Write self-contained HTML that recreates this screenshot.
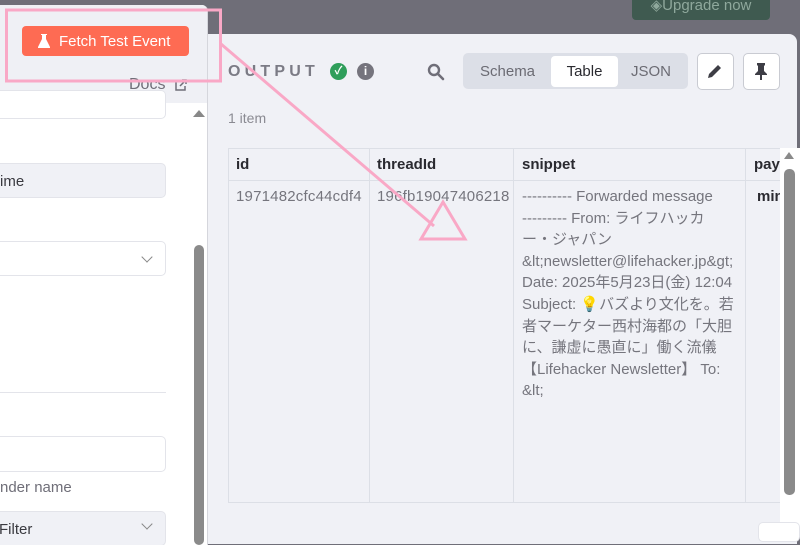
<!DOCTYPE html>
<html><head><meta charset="utf-8"><style>
*{box-sizing:border-box;margin:0;padding:0}
body{width:800px;height:533px;overflow:hidden;background:#6f6e78;position:relative;font-family:"Liberation Sans","Noto Sans CJK JP",sans-serif;}
.abs{position:absolute}
</style></head><body>
<div class="abs" style="left:632px;top:-12px;width:138px;height:32px;background:#3f5a50;border-radius:4px;color:#8fa89c;font-size:15px;line-height:36px;text-align:center">◈Upgrade now</div>
<div class="abs" style="left:200px;top:34px;width:597px;height:510px;background:#f0f1f6;border-radius:0 8px 0 0"></div>
<div class="abs" style="left:228px;top:63px;font-size:16px;letter-spacing:4.2px;color:#7b7b85;font-weight:bold">OUTPUT</div>
<div class="abs" style="left:330px;top:63px;width:17px;height:17px;border-radius:50%;background:#2f9e5b;color:#fff;font-size:11px;text-align:center;line-height:17px;font-weight:bold">✓</div>
<div class="abs" style="left:357px;top:63px;width:17px;height:17px;border-radius:50%;background:#75747d;color:#fff;font-size:12px;text-align:center;line-height:17px;font-weight:bold">i</div>
<svg class="abs" style="left:427px;top:63px" width="18" height="18" viewBox="0 0 18 18"><circle cx="7" cy="7" r="5" fill="none" stroke="#6f6e78" stroke-width="2.4"/><path d="M11 11l5 5" stroke="#6f6e78" stroke-width="2.6" stroke-linecap="round"/></svg>
<div class="abs" style="left:463px;top:53px;width:225px;height:36px;background:#dcdfe7;border-radius:5px"></div>
<div class="abs" style="left:480px;top:63px;font-size:15px;color:#6b6b73">Schema</div>
<div class="abs" style="left:551px;top:56px;width:67px;height:31px;background:#fff;border-radius:4px;font-size:15px;color:#2a2a30;text-align:center;line-height:32px">Table</div>
<div class="abs" style="left:631px;top:63px;font-size:15px;color:#6b6b73">JSON</div>
<div class="abs" style="left:697px;top:53px;width:37px;height:37px;background:#fff;border:1px solid #c9cbd2;border-radius:5px"></div>
<svg class="abs" style="left:705px;top:61px" width="20" height="20" viewBox="0 0 20 20"><path d="M3 17l1-4 9-9 3 3-9 9z" fill="#3d3d45"/></svg>
<div class="abs" style="left:743px;top:53px;width:37px;height:37px;background:#fff;border:1px solid #c9cbd2;border-radius:5px"></div>
<svg class="abs" style="left:751px;top:61px" width="20" height="20" viewBox="0 0 20 20"><path d="M6 2h8v2l-1 1v5l3 3v1H4v-1l3-3V5L6 4z M9 14h2v5H9z" fill="#3d3d45"/></svg>
<div class="abs" style="left:228px;top:110px;font-size:14px;color:#8a8a92">1 item</div>
<div class="abs" style="left:228px;top:148px;width:560px;height:355px;border:1px solid #dcdfe6;border-right:none"></div>
<div class="abs" style="left:228px;top:180px;width:560px;height:1px;background:#dcdfe6"></div>
<div class="abs" style="left:369px;top:148px;width:1px;height:355px;background:#dcdfe6"></div>
<div class="abs" style="left:513px;top:148px;width:1px;height:355px;background:#dcdfe6"></div>
<div class="abs" style="left:745px;top:148px;width:1px;height:355px;background:#dcdfe6"></div>
<div class="abs" style="left:236px;top:156px;font-size:15px;font-weight:bold;color:#2a2a30">id</div>
<div class="abs" style="left:377px;top:156px;font-size:15px;font-weight:bold;color:#2a2a30">threadId</div>
<div class="abs" style="left:522px;top:156px;font-size:15px;font-weight:bold;color:#2a2a30">snippet</div>
<div class="abs" style="left:754px;top:156px;font-size:15px;font-weight:bold;color:#2a2a30">pay</div>
<div class="abs" style="left:236px;top:188px;font-size:15px;letter-spacing:0.2px;color:#75757d">1971482cfc44cdf4</div>
<div class="abs" style="left:377px;top:188px;font-size:15px;letter-spacing:0.2px;color:#75757d">196fb19047406218</div>
<div class="abs" style="left:757px;top:188px;font-size:15px;font-weight:bold;color:#2a2a30">min</div>
<div class="abs" style="left:522px;top:186px;white-space:nowrap;font-size:15px;line-height:21.6px;color:#75757d">---------- Forwarded message<br>--------- From: ライフハッカ<br>ー・ジャパン<br>&amp;lt;newsletter@lifehacker.jp&amp;gt;<br>Date: 2025年5月23日(金) 12:04<br>Subject: <span style="color:#e88">💡</span>バズより文化を。若<br>者マーケター西村海都の「大胆<br>に、謙虚に愚直に」働く流儀<br>【Lifehacker Newsletter】 To:<br>&amp;lt;</div>
<div class="abs" style="left:780px;top:148px;width:20px;height:385px;background:#fff"></div>
<div class="abs" style="left:784px;top:169px;width:11px;border-radius:5px;height:326px;background:#8a8a8a"></div>
<div class="abs" style="left:784px;top:152px;width:0;height:0;border-left:5px solid transparent;border-right:5px solid transparent;border-bottom:7px solid #8a8a8a"></div>
<div class="abs" style="left:758px;top:522px;width:42px;height:20px;background:#fff;border-radius:5px;border:1px solid #e3e4ea"></div>
<div class="abs" style="left:0;top:5px;width:208px;height:540px;background:#fff;border-right:1px solid #d5d6dc;border-radius:0 6px 0 0;overflow:hidden">
 <div class="abs" style="left:0;top:0;width:208px;height:98px;background:#eff0f5"></div>
 <div class="abs" style="left:22px;top:21px;width:167px;height:30px;background:#fe6b53;border-radius:4px;color:#fff;font-size:15px;line-height:31px;padding-left:37px">Fetch Test Event</div>
 <svg class="abs" style="left:38px;top:29px" width="12" height="14" viewBox="0 0 12 14"><path d="M3 0h6v1H8v4l4 8v1H0v-1l4-8V1H3z" fill="#fff"/></svg>
 <div class="abs" style="left:129px;top:71px;font-size:16px;color:#6f6e78">Docs</div>
 <svg class="abs" style="left:175px;top:74px" width="12" height="12" viewBox="0 0 12 12"><path d="M5 2H1v9h9V7M7 1h4v4M11 1L5 7" fill="none" stroke="#6f6e78" stroke-width="1.5"/></svg>
 <div class="abs" style="left:-10px;top:85px;width:176px;height:29px;border:1px solid #e3e4ea;border-radius:5px;background:#fff"></div>
 <div class="abs" style="left:-10px;top:158px;width:176px;height:35px;border:1px solid #e3e4ea;border-radius:5px;background:#f0f1f6;font-size:15px;color:#3a3a40;line-height:35px;padding-left:9px">ime</div>
 <div class="abs" style="left:-10px;top:236px;width:176px;height:35px;border:1px solid #e3e4ea;border-radius:5px;background:#fff"></div>
 <div class="abs" style="left:143px;top:248px;width:8px;height:8px;border-right:1.3px solid #888;border-bottom:1.3px solid #888;transform:rotate(45deg)"></div>
 <div class="abs" style="left:0;top:387px;width:166px;height:1px;background:#e3e4ea"></div>
 <div class="abs" style="left:-10px;top:431px;width:176px;height:36px;border:1px solid #e3e4ea;border-radius:5px;background:#fff"></div>
 <div class="abs" style="left:0;top:474px;font-size:15px;color:#6f6e78">nder name</div>
 <div class="abs" style="left:-10px;top:506px;width:176px;height:35px;border:1px solid #e3e4ea;border-radius:5px;background:#f0f1f6;font-size:15px;color:#3a3a40;line-height:35px;padding-left:8px">Filter</div>
 <div class="abs" style="left:143px;top:515px;width:8px;height:8px;border-right:1.3px solid #888;border-bottom:1.3px solid #888;transform:rotate(45deg)"></div>
 <div class="abs" style="left:193px;top:105px;width:0;height:0;border-left:6px solid transparent;border-right:6px solid transparent;border-bottom:7px solid #888"></div>
 <div class="abs" style="left:194px;top:240px;width:10px;height:300px;background:#8a8a8a;border-radius:5px"></div>
</div>
<svg class="abs" style="left:0;top:0" width="800" height="533"><g fill="none" stroke="#f9a8c6" stroke-width="3"><rect x="6.5" y="10" width="214" height="71"/><path d="M221 44L434 226"/><path d="M443 202L465 239L421 239Z"/></g></svg>
</body></html>
